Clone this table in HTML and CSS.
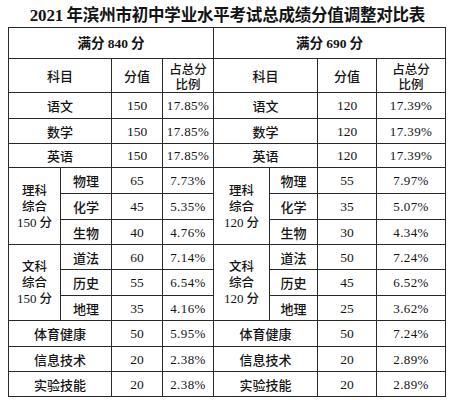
FILE: index.html
```html
<!DOCTYPE html>
<html lang="zh">
<head>
<meta charset="utf-8">
<link rel="stylesheet" href="styles.css">
</head>
<body>
<div class="page">
  <h1 class="title"><span class="num">2021</span> 年滨州市初中学业水平考试总成绩分值调整对比表</h1>
  <table class="grid">
    <colgroup>
      <col class="c52"><col class="c51"><col class="c51"><col class="c51">
      <col class="c56"><col class="c48"><col class="c59"><col class="c69">
    </colgroup>
    <tr class="h31">
      <td colspan="4" class="bold">满分 <span class="num">840</span> 分</td>
      <td colspan="4" class="bold">满分 <span class="num">690</span> 分</td>
    </tr>
    <tr class="h34">
      <td colspan="2">科目</td><td>分值</td><td class="two">占总分<br>比例</td>
      <td colspan="2">科目</td><td>分值</td><td class="two">占总分<br>比例</td>
    </tr>
    <tr class="h26">
      <td colspan="2">语文</td><td class="num">150</td><td class="pct">17.85%</td>
      <td colspan="2">语文</td><td class="num">120</td><td class="pct">17.39%</td>
    </tr>
    <tr class="h25">
      <td colspan="2">数学</td><td class="num">150</td><td class="pct">17.85%</td>
      <td colspan="2">数学</td><td class="num">120</td><td class="pct">17.39%</td>
    </tr>
    <tr class="h24">
      <td colspan="2">英语</td><td class="num">150</td><td class="pct">17.85%</td>
      <td colspan="2">英语</td><td class="num">120</td><td class="pct">17.39%</td>
    </tr>
    <tr class="h26">
      <td rowspan="3" class="group">理科<br>综合<br><span class="num">150</span> 分</td>
      <td>物理</td><td class="num">65</td><td class="pct">7.73%</td>
      <td rowspan="3" class="group">理科<br>综合<br><span class="num">120</span> 分</td>
      <td>物理</td><td class="num">55</td><td class="pct">7.97%</td>
    </tr>
    <tr class="h26">
      <td>化学</td><td class="num">45</td><td class="pct">5.35%</td>
      <td>化学</td><td class="num">35</td><td class="pct">5.07%</td>
    </tr>
    <tr class="h25">
      <td>生物</td><td class="num">40</td><td class="pct">4.76%</td>
      <td>生物</td><td class="num">30</td><td class="pct">4.34%</td>
    </tr>
    <tr class="h25">
      <td rowspan="3" class="group">文科<br>综合<br><span class="num">150</span> 分</td>
      <td>道法</td><td class="num">60</td><td class="pct">7.14%</td>
      <td rowspan="3" class="group">文科<br>综合<br><span class="num">120</span> 分</td>
      <td>道法</td><td class="num">50</td><td class="pct">7.24%</td>
    </tr>
    <tr class="h26">
      <td>历史</td><td class="num">55</td><td class="pct">6.54%</td>
      <td>历史</td><td class="num">45</td><td class="pct">6.52%</td>
    </tr>
    <tr class="h25">
      <td>地理</td><td class="num">35</td><td class="pct">4.16%</td>
      <td>地理</td><td class="num">25</td><td class="pct">3.62%</td>
    </tr>
    <tr class="h26">
      <td colspan="2">体育健康</td><td class="num">50</td><td class="pct">5.95%</td>
      <td colspan="2">体育健康</td><td class="num">50</td><td class="pct">7.24%</td>
    </tr>
    <tr class="h25">
      <td colspan="2">信息技术</td><td class="num">20</td><td class="pct">2.38%</td>
      <td colspan="2">信息技术</td><td class="num">20</td><td class="pct">2.89%</td>
    </tr>
    <tr class="h25">
      <td colspan="2">实验技能</td><td class="num">20</td><td class="pct">2.38%</td>
      <td colspan="2">实验技能</td><td class="num">20</td><td class="pct">2.89%</td>
    </tr>
  </table>
</div>
</body>
</html>
```
FILE: styles.css
```css
html, body {
  margin: 0;
  padding: 0;
  background: #ffffff;
}
.page {
  padding: 0 9px 0 8px;
  color: #141414;
  font-family: "Noto Sans CJK SC", "Liberation Serif", serif;
}
.title {
  margin: 0;
  height: 27px;
  line-height: 29px;
  font-size: 16.5px;
  font-weight: 700;
  text-align: center;
  padding-left: 2px;
  white-space: nowrap;
  letter-spacing: -0.2px;
}
.num, .pct {
  font-family: "Liberation Serif", "Noto Sans CJK SC", serif;
}
.title .num {
  font-size: 17px;
}
.grid {
  border-collapse: collapse;
  table-layout: fixed;
  width: 437px;
  font-size: 13px;
}
.grid td {
  border: 1px solid #2a2a2a;
  padding: 0;
  text-align: center;
  vertical-align: middle;
  line-height: 15px;
  font-weight: 500;
}
.grid td.num {
  font-size: 13.5px;
  font-weight: 400;
}
.grid td.pct {
  font-size: 13px;
  font-weight: 400;
  letter-spacing: 0.4px;
}
.grid td.bold {
  font-weight: 700;
  font-size: 13.5px;
}
.grid td.bold .num {
  font-weight: 700;
}
.grid td.two {
  font-size: 12.5px;
  line-height: 15px;
  padding-top: 1px;
}
.grid td.group {
  font-size: 12.5px;
  line-height: 16px;
}
.grid td.group .num {
  font-size: 13px;
}
.c52 { width: 52px; }
.c51 { width: 51px; }
.c56 { width: 56px; }
.c48 { width: 48px; }
.c59 { width: 59px; }
.c69 { width: 69px; }
.h31 { height: 31px; }
.h34 { height: 34px; }
.h26 { height: 26px; }
.h25 { height: 25px; }
.h24 { height: 24px; }
```
